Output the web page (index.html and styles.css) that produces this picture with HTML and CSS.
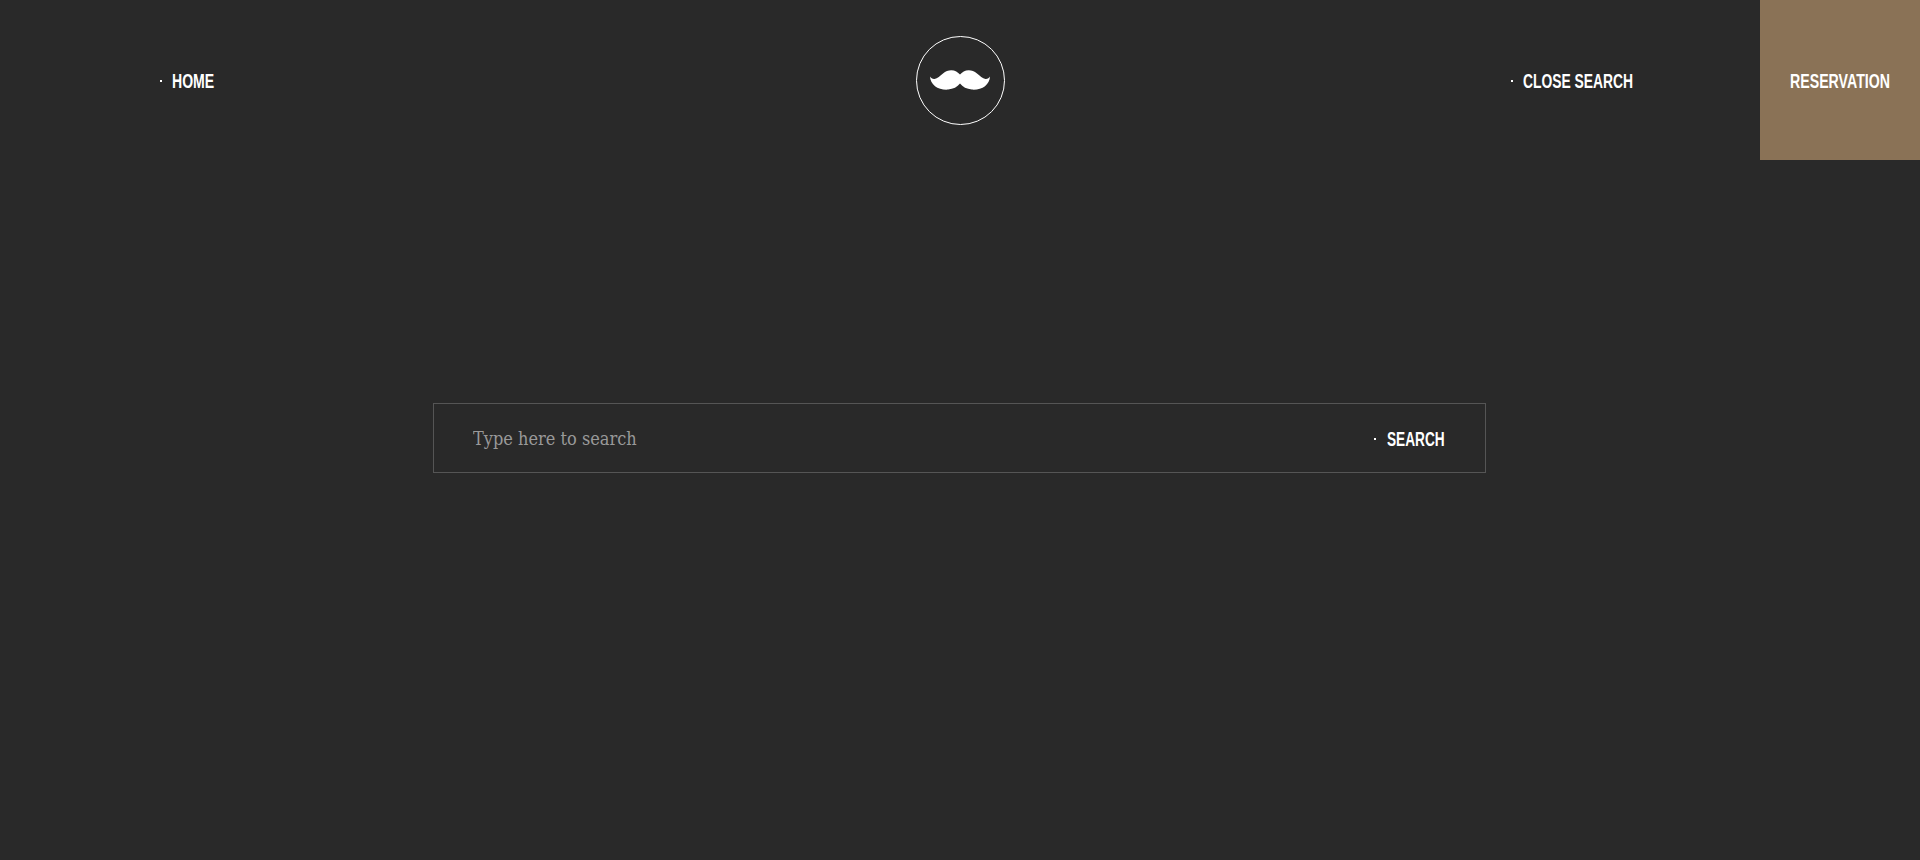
FILE: index.html
```html
<!DOCTYPE html>
<html lang="en">
<head>
<meta charset="utf-8">
<title>Search</title>
<link rel="stylesheet" href="styles.css">
</head>
<body>
<header class="header">
  <nav class="header-left">
    <a class="link" href="#"><span class="dot"></span><span class="label label-home">HOME</span></a>
  </nav>
  <a class="logo" href="#" aria-label="Logo">
    <svg class="stache" viewBox="0 0 60 20" width="60" height="20">
      <path fill="#fff" d="M0 6.5C1 8.2 2.6 9.2 4.5 9C7.5 8.6 10 5.6 13 3.4C15.6 1.4 18.4.2 21.2.2C25 .2 28 2.2 30 4.6C32 2.2 35 .2 38.8.2C41.6.2 44.4 1.4 47 3.4C50 5.6 52.5 8.6 55.5 9C57.4 9.2 59 8.2 60 6.5C59.8 10 58.2 13.6 55 16.2C51.8 18.8 46.6 20 41.8 19.6C36.8 19.2 32.6 17 30 13.6C27.4 17 23.2 19.2 18.2 19.6C13.4 20 8.2 18.8 5 16.2C1.8 13.6 .2 10 0 6.5Z"/>
    </svg>
  </a>
  <div class="header-right">
    <a class="link close" href="#"><span class="dot"></span><span class="label label-close">CLOSE SEARCH</span></a>
    <a class="reserve" href="#"><span class="label label-reserve">RESERVATION</span></a>
  </div>
</header>
<main class="main">
  <form class="search">
    <input class="search-input" type="text" placeholder="Type here to search">
    <button class="link search-btn" type="button"><span class="dot"></span><span class="label label-search">SEARCH</span></button>
  </form>
</main>
</body>
</html>
```
FILE: styles.css
```css
* { box-sizing: border-box; }
html, body { margin: 0; height: 100%; }
body {
  background: #292929;
  color: #fff;
  font-family: "Liberation Sans", sans-serif;
  overflow: hidden;
}
a { color: inherit; text-decoration: none; }
.header {
  height: 160px;
  display: grid;
  grid-template-columns: 1fr 89px 1fr;
  align-items: center;
  padding-left: 1px;
}
.header-left {
  display: flex;
  align-items: center;
  padding-left: 159px;
}
.header-right {
  display: flex;
  justify-content: flex-end;
  align-items: center;
}
.link {
  display: flex;
  align-items: center;
  gap: 10px;
  color: #fff;
  padding-top: 2px;
}
.dot {
  width: 2px;
  height: 2px;
  background: #fff;
  flex: none;
}
.label {
  display: block;
  font-size: 21px;
  line-height: 24px;
  font-weight: 700;
  white-space: nowrap;
  text-align: left;
  transform-origin: left center;
}
.label-home { width: 43px; transform: scaleX(.67); }
.label-close { width: 111px; transform: scaleX(.66); }
.label-reserve { width: 100px; transform: scaleX(.675); }
.label-search { width: 59px; transform: scaleX(.65); }
.logo {
  width: 89px;
  height: 89px;
  border: 1px solid #fff;
  border-radius: 50%;
  display: flex;
  align-items: center;
  justify-content: center;
  padding-right: 1px;
}
.close { margin-right: 126px; }
.reserve {
  width: 160px;
  height: 160px;
  background: #8a7256;
  display: flex;
  align-items: center;
  justify-content: center;
  padding-top: 2px;
}
.main {
  display: flex;
  justify-content: center;
  padding-top: 243px;
}
.search {
  width: 1053px;
  height: 70px;
  margin-right: 1px;
  border: 1px solid #555;
  display: flex;
  align-items: center;
  justify-content: space-between;
  padding: 0 39px;
}
.search-input {
  flex: 1;
  background: none;
  border: 0;
  outline: 0;
  padding: 0;
  color: #fff;
  font-family: "DejaVu Serif Condensed", "DejaVu Serif", serif;
  font-size: 18px;
}
.search-input::placeholder { color: #999; opacity: 1; }
.search-btn {
  background: none;
  border: 0;
  padding: 2px 0 0;
  gap: 11px;
  font-family: inherit;
}
```
